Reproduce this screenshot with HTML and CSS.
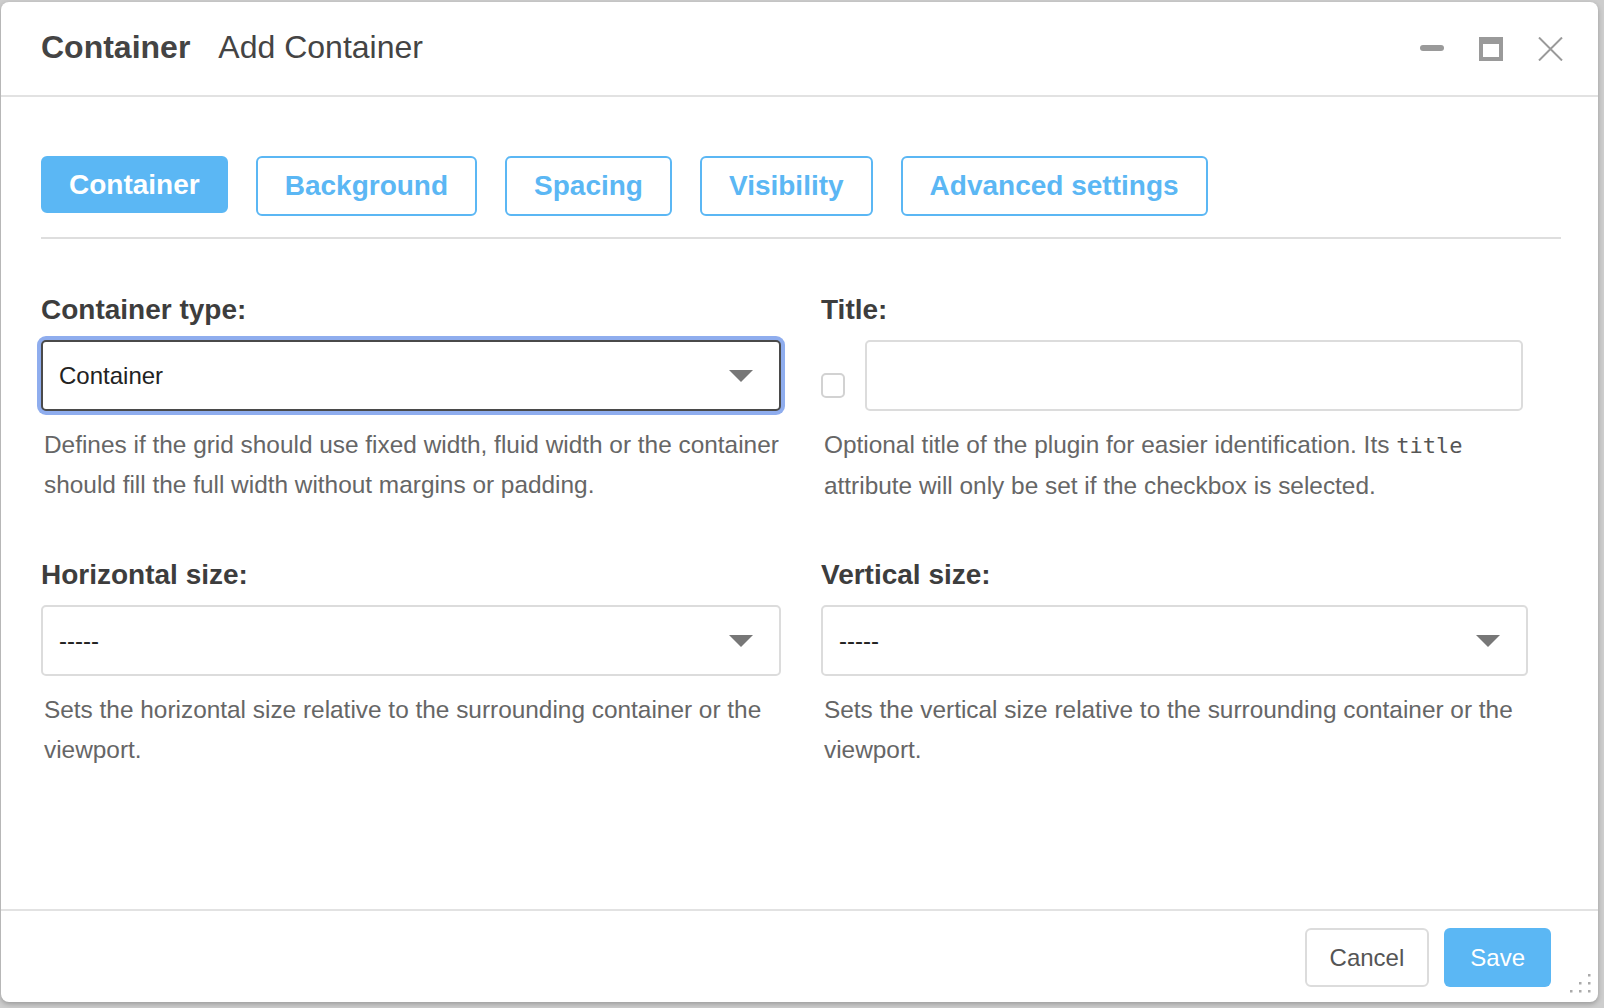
FILE: index.html
```html
<!DOCTYPE html>
<html lang="en">
<head>
<meta charset="utf-8">
<title>Add Container</title>
<link rel="stylesheet" href="styles.css">
</head>
<body>
<div class="dialog">
  <header class="dlg-head">
    <div class="titles">
      <span class="t-main">Container</span>
      <span class="t-sub">Add Container</span>
    </div>
    <div class="win-ctrls">
      <svg class="ico" width="24" height="24" viewBox="0 0 24 24"><rect x="0" y="8" width="24" height="6" rx="3" fill="#9a9a9a"/></svg>
      <svg class="ico" width="24" height="24" viewBox="0 0 24 24"><path fill="#9a9a9a" fill-rule="evenodd" d="M0 0H24V24H0Z M4 7V20H20V7Z"/></svg>
      <svg class="ico" width="25" height="24" viewBox="0 0 25 24"><path d="M1 0.5L24 23.5M24 0.5L1 23.5" stroke="#9a9a9a" stroke-width="2" fill="none"/></svg>
    </div>
  </header>

  <main class="dlg-body">
    <nav class="tabs">
      <button class="tab active">Container</button>
      <button class="tab">Background</button>
      <button class="tab">Spacing</button>
      <button class="tab">Visibility</button>
      <button class="tab">Advanced settings</button>
    </nav>
    <div class="tabs-rule"></div>

    <div class="form-grid">
      <div class="field">
        <label class="lbl">Container type:</label>
        <div class="sel focus">
          <span>Container</span>
          <svg width="24" height="12" viewBox="0 0 24 12"><path d="M0 0H24L12 12Z" fill="#777"/></svg>
        </div>
        <p class="help">Defines if the grid should use fixed width, fluid width or the container should fill the full width without margins or padding.</p>
      </div>

      <div class="field">
        <label class="lbl">Title:</label>
        <div class="title-row">
          <span class="chk"></span>
          <span class="txt-input"></span>
        </div>
        <p class="help">Optional title of the plugin for easier identification. Its <code>title</code> attribute will only be set if the checkbox is selected.</p>
      </div>

      <div class="field">
        <label class="lbl">Horizontal size:</label>
        <div class="sel">
          <span>-----</span>
          <svg width="24" height="12" viewBox="0 0 24 12"><path d="M0 0H24L12 12Z" fill="#777"/></svg>
        </div>
        <p class="help">Sets the horizontal size relative to the surrounding container or the viewport.</p>
      </div>

      <div class="field">
        <label class="lbl">Vertical size:</label>
        <div class="sel">
          <span>-----</span>
          <svg width="24" height="12" viewBox="0 0 24 12"><path d="M0 0H24L12 12Z" fill="#777"/></svg>
        </div>
        <p class="help">Sets the vertical size relative to the surrounding container or the viewport.</p>
      </div>
    </div>
  </main>

  <footer class="dlg-foot">
    <button class="btn btn-cancel">Cancel</button>
    <button class="btn btn-save">Save</button>
  </footer>

  <svg class="grip" width="24" height="24" viewBox="0 0 24 24">
    <g fill="#aaa">
      <rect x="19" y="2" width="2.5" height="2.5"/>
      <rect x="10" y="10" width="2.5" height="2.5"/>
      <rect x="19" y="10" width="2.5" height="2.5"/>
      <rect x="1" y="18" width="2.5" height="2.5"/>
      <rect x="10" y="18" width="2.5" height="2.5"/>
      <rect x="19" y="18" width="2.5" height="2.5"/>
    </g>
  </svg>
</div>
</body>
</html>
```

FILE: styles.css
```css
* { box-sizing: border-box; }

html, body {
  margin: 0;
  height: 100%;
}

body {
  background: #cdcdcd;
  padding: 2px 6px 6px 1px;
  overflow: hidden;
  font-family: "Liberation Sans", Arial, Helvetica, sans-serif;
}

.dialog {
  position: relative;
  height: 100%;
  background: #fff;
  border-radius: 8px;
  display: flex;
  flex-direction: column;
  box-shadow: 0 2px 5px rgba(0, 0, 0, 0.25);
  overflow: hidden;
}

/* header */
.dlg-head {
  height: 95px;
  flex: none;
  border-bottom: 2px solid #e2e2e2;
  display: flex;
  align-items: center;
  justify-content: space-between;
  padding: 0 35px 0 40px;
}

.titles {
  display: flex;
  align-items: baseline;
  gap: 28px;
  color: #444;
  font-size: 32px;
  margin-top: -2px;
}

.t-main { font-weight: bold; }
.t-sub { font-weight: normal; }

.win-ctrls {
  display: flex;
  align-items: center;
  gap: 35px;
}

.ico { display: block; }

/* body */
.dlg-body {
  flex: 1;
  padding: 59px 37px 0 40px;
}

.tabs {
  display: flex;
  align-items: flex-start;
  gap: 28px;
}

.tab {
  height: 60px;
  padding: 0 27px;
  border: 2px solid #5bb7f4;
  border-radius: 6px;
  background: #fff;
  color: #5bb7f4;
  font-family: "Liberation Sans", Arial, sans-serif;
  font-weight: bold;
  font-size: 28px;
  display: flex;
  align-items: center;
  cursor: pointer;
}

.tab.active {
  height: 57px;
  padding: 0 26px;
  background: #5bb7f4;
  color: #fff;
}

.tabs-rule {
  height: 2px;
  background: #dedede;
  margin-top: 21px;
}

.form-grid {
  display: grid;
  grid-template-columns: 740px 707px;
  column-gap: 40px;
  row-gap: 52px;
  margin-top: 54px;
}

.lbl {
  display: block;
  font-weight: bold;
  font-size: 28px;
  line-height: 34px;
  color: #3d3d3d;
  margin-bottom: 13px;
}

.sel {
  height: 71px;
  border: 2px solid #dcdcdc;
  border-radius: 5px;
  padding: 0 26px 0 16px;
  display: flex;
  align-items: center;
  justify-content: space-between;
  font-size: 24px;
  color: #222;
  background: #fff;
}

.sel svg { display: block; }

.sel.focus {
  border-color: #4a4a4a;
  box-shadow: 0 0 0 4px #8fadee;
}

.title-row {
  display: flex;
  align-items: flex-end;
}

.chk {
  width: 24px;
  height: 25px;
  border: 2px solid #d2d2d2;
  border-radius: 5px;
  margin-bottom: 13px;
  flex: none;
}

.txt-input {
  flex: 1;
  height: 71px;
  margin-left: 20px;
  margin-right: 5px;
  border: 2px solid #dcdcdc;
  border-radius: 5px;
}

.help {
  margin: 14px 0 0;
  padding-left: 3px;
  font-size: 24.4px;
  line-height: 40px;
  color: #666;
}

.help code {
  font-family: "DejaVu Sans Mono", "Liberation Mono", monospace;
  font-size: 22px;
  color: #555;
}

/* footer */
.dlg-foot {
  flex: none;
  border-top: 2px solid #e2e2e2;
  padding: 17px 47px 15px;
  display: flex;
  justify-content: flex-end;
  gap: 15px;
}

.btn {
  height: 59px;
  border-radius: 6px;
  font-family: "Liberation Sans", Arial, sans-serif;
  font-size: 24px;
  cursor: pointer;
}

.btn-cancel {
  padding: 0 23px;
  border: 2px solid #dcdcdc;
  background: #fff;
  color: #555;
}

.btn-save {
  padding: 0 26px;
  border: none;
  background: #5bb7f4;
  color: #fff;
}

.grip {
  position: absolute;
  right: 5px;
  bottom: 6px;
  display: block;
}
```
